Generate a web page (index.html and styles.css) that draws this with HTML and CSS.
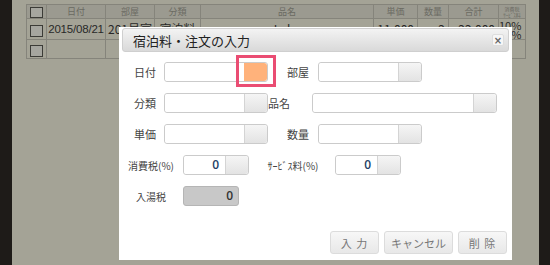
FILE: index.html
```html
<!DOCTYPE html>
<html lang="ja">
<head>
    <meta charset="UTF-8">
    <title>宿泊料・注文の入力</title>
    <link rel="stylesheet" href="styles.css">
</head>
<body>

    <div class="page">
        <table class="order-table">
            <tr class="head-row">
                <th class="col-check"><span class="check"></span></th>
                <th class="col-date">日付</th>
                <th class="col-room">部屋</th>
                <th class="col-kind">分類</th>
                <th class="col-name">品名</th>
                <th class="col-price">単価</th>
                <th class="col-qty">数量</th>
                <th class="col-total">合計</th>
                <th class="col-tax"><span class="tax-head">消費税<br>ｻｰﾋﾞｽ料</span></th>
            </tr>
            <tr>
                <td><span class="check"></span></td>
                <td class="cell-date">2015/08/21</td>
                <td>201号室</td>
                <td>宿泊料</td>
                <td>Lake</td>
                <td class="num">11,000</td>
                <td class="num">2</td>
                <td class="num">22,000</td>
                <td class="cell-tax">10%<br>10%</td>
            </tr>
            <tr>
                <td><span class="check"></span></td>
                <td></td><td></td><td></td><td></td><td></td><td></td><td></td><td></td>
            </tr>
        </table>
    </div>

    <div class="overlay"></div>

    <div class="dialog">
        <div class="dialog-title">
            <span>宿泊料・注文の入力</span>
            <button class="close-button">×</button>
        </div>

        <div class="dialog-body">
            <div class="form-row">
                <label class="lbl lbl-a">日付</label>
                <div class="field field-md">
                    <span class="field-input"></span>
                    <span class="field-btn btn-orange"></span>
                    <span class="highlight"></span>
                </div>
                <label class="lbl lbl-b">部屋</label>
                <div class="field field-md">
                    <span class="field-input"></span>
                    <span class="field-btn"></span>
                </div>
            </div>

            <div class="form-row">
                <label class="lbl lbl-a">分類</label>
                <div class="field field-md">
                    <span class="field-input"></span>
                    <span class="field-btn"></span>
                </div>
                <label class="lbl lbl-c">品名</label>
                <div class="field field-lg">
                    <span class="field-input"></span>
                    <span class="field-btn"></span>
                </div>
            </div>

            <div class="form-row">
                <label class="lbl lbl-a">単価</label>
                <div class="field field-md">
                    <span class="field-input"></span>
                    <span class="field-btn"></span>
                </div>
                <label class="lbl lbl-b">数量</label>
                <div class="field field-md">
                    <span class="field-input"></span>
                    <span class="field-btn"></span>
                </div>
            </div>

            <div class="form-row">
                <label class="lbl lbl-d">消費税(%)</label>
                <div class="field field-sm">
                    <span class="field-input value">0</span>
                    <span class="field-btn"></span>
                </div>
                <label class="lbl lbl-e">ｻｰﾋﾞｽ料(%)</label>
                <div class="field field-sm">
                    <span class="field-input value">0</span>
                    <span class="field-btn"></span>
                </div>
            </div>

            <div class="form-row">
                <label class="lbl lbl-d">入湯税</label>
                <div class="readonly">0</div>
            </div>
        </div>

        <div class="dialog-buttons">
            <button class="action-button">入&nbsp;力</button>
            <button class="action-button wide">キャンセル</button>
            <button class="action-button">削&nbsp;除</button>
        </div>
    </div>

</body>
</html>
```

FILE: styles.css
```css
body {
    margin: 0;
    width: 550px;
    height: 265px;
    overflow: hidden;
    background-color: #2e2a26;
    font-family: "Noto Sans CJK JP", "Noto Sans", sans-serif;
    position: relative;
}

.page {
    margin: 0 11px 0 12px;
    height: 265px;
    background-color: #fcfbe7;
    padding: 4px 0 0 14px;
    box-sizing: border-box;
}

.order-table {
    border-collapse: collapse;
    width: 500px;
    table-layout: fixed;
    color: #3e3e3e;
}

.order-table th,
.order-table td {
    border: 1px solid #cdcbbd;
    padding: 0;
    overflow: hidden;
    white-space: nowrap;
}

.order-table th {
    background-color: #eeedde;
    color: #a5a496;
    font-size: 9px;
    font-weight: normal;
    height: 13px;
    line-height: 12px;
}

.order-table td {
    height: 18px;
    font-size: 12px;
    line-height: 18px;
    text-align: center;
}

.col-check { width: 19px; }
.col-date { width: 58px; }
.col-room { width: 48px; }
.col-kind { width: 45px; }
.col-name { width: 172px; }
.col-price { width: 43px; }
.col-qty { width: 30px; }
.col-total { width: 49px; }
.col-tax { width: 26px; }

.order-table td.num {
    text-align: right;
    padding-right: 3px;
}

.order-table td.cell-date {
    font-family: "Liberation Sans", sans-serif;
    font-size: 11.5px;
    letter-spacing: -0.2px;
}

.order-table td.cell-tax {
    font-size: 11px;
    line-height: 9px;
    text-align: left;
    vertical-align: top;
    padding-top: 2px;
}

.tax-head {
    display: block;
    font-size: 5px;
    line-height: 6px;
}

.check {
    display: inline-block;
    width: 11px;
    height: 9px;
    border: 1px solid #5c5c55;
    background-color: #fffff4;
    vertical-align: middle;
}

.order-table td .check {
    height: 10px;
}

.overlay {
    position: absolute;
    inset: 0;
    background-color: rgba(0, 0, 0, 0.35);
}

.dialog {
    position: absolute;
    left: 119px;
    top: 27px;
    width: 393px;
    height: 233px;
    background-color: #fff;
    box-sizing: border-box;
    padding: 1px 3px 0 3px;
}

.dialog-title {
    display: flex;
    align-items: center;
    justify-content: space-between;
    height: 24px;
    box-sizing: border-box;
    border: 1px solid #cfcfcf;
    border-radius: 3px;
    background: linear-gradient(#f3f3f3, #d9d9d9);
    padding: 0 3px 0 10px;
    font-size: 13px;
    color: #222;
    font-weight: normal;
}

.close-button {
    width: 12px;
    height: 12px;
    padding: 0;
    border: 1px solid #ddd;
    border-radius: 2px;
    background-color: #f6f6f6;
    color: #666;
    font-size: 10px;
    line-height: 9px;
    font-weight: bold;
    font-family: "DejaVu Sans", sans-serif;
    margin-right: 1px;
}

.dialog-body {
    padding: 10px 0 0 5px;
}

.form-row {
    display: flex;
    align-items: center;
    height: 20px;
    margin-bottom: 11px;
    font-size: 11px;
    color: #444;
}

.lbl {
    flex: none;
}

.lbl-a {
    width: 29px;
    text-align: right;
    margin-right: 8px;
}

.lbl-b {
    width: 31px;
    margin-left: 10px;
    text-align: right;
    margin-right: 9px;
}

.lbl-c {
    width: 35px;
    margin-left: 0;
    text-align: left;
    margin-right: 9px;
}

.lbl-d {
    width: 50px;
    margin-left: -1px;
    text-align: center;
    margin-right: 7px;
    font-size: 10px;
}

.lbl-e {
    width: 60px;
    margin-left: 14px;
    text-align: center;
    margin-right: 12px;
    font-size: 10px;
}

.field {
    flex: none;
    position: relative;
    display: flex;
    height: 20px;
    border: 1px solid #cbcbcb;
    border-radius: 3px;
    box-sizing: border-box;
}

.field-md { width: 104px; }
.field-lg { width: 185px; }
.field-sm { width: 66px; }

.field-input {
    flex: 1;
    background-color: #fff;
    border-radius: 3px 0 0 3px;
}

.field-input.value {
    text-align: right;
    padding-right: 6px;
    font-size: 12px;
    line-height: 18px;
    color: #1f3f66;
    font-family: "Open Sans", sans-serif;
    font-weight: 600;
}

.field-btn {
    width: 22px;
    border-left: 1px solid #d4d4d4;
    border-radius: 0 3px 3px 0;
    background: linear-gradient(#f5f5f5, #e3e3e3);
}

.field-btn.btn-orange {
    background: #ffb27b;
    border-left-color: #ffb27b;
}

.highlight {
    position: absolute;
    left: 71px;
    top: -8px;
    width: 34px;
    height: 26px;
    border: 3px solid #ea4d73;
}

.readonly {
    width: 56px;
    height: 20px;
    box-sizing: border-box;
    border: 1px solid #b5b5b5;
    border-radius: 3px;
    background-color: #c8c8c8;
    text-align: right;
    padding-right: 5px;
    font-size: 12px;
    line-height: 18px;
    color: #333;
    font-family: "Open Sans", sans-serif;
    font-weight: 600;
}

.dialog-buttons {
    display: flex;
    justify-content: flex-end;
    gap: 5px;
    margin-top: 25px;
    padding-right: 2px;
}

.action-button {
    width: 49px;
    height: 23px;
    padding: 0;
    border: 1px solid #dcdcdc;
    border-radius: 3px;
    background: linear-gradient(#f7f7f7, #e8e8e8);
    color: #777;
    font-size: 11px;
    font-family: "Noto Sans CJK JP", sans-serif;
    letter-spacing: 1px;
}

.action-button.wide {
    width: 69px;
    letter-spacing: 0;
}
```
